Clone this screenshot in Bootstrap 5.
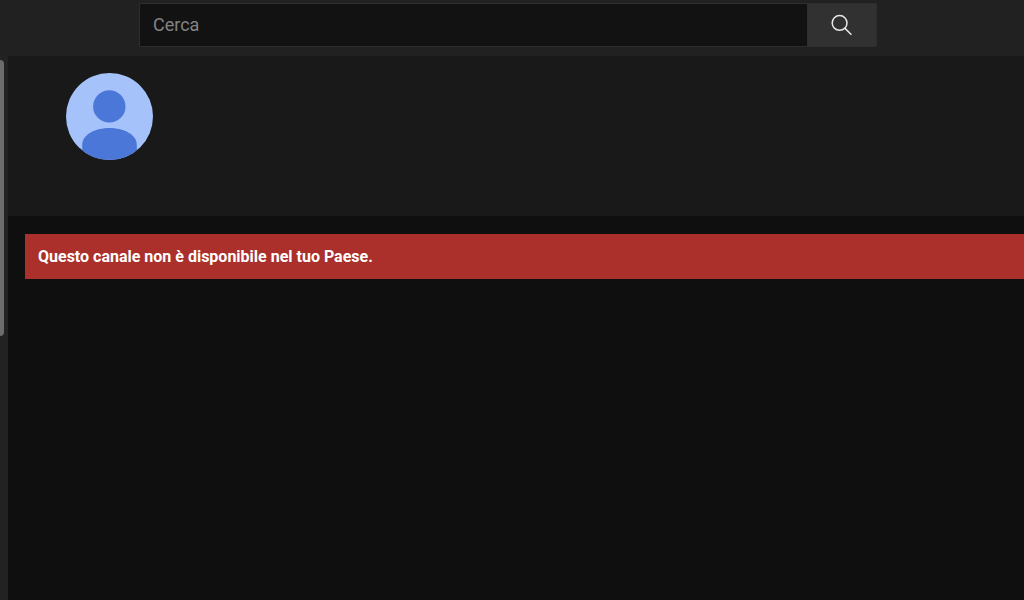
<!DOCTYPE html>
<html lang="it" data-bs-theme="dark">
<head>
<meta charset="utf-8">
<meta name="viewport" content="width=device-width, initial-scale=1">
<title>Canale non disponibile</title>
<link href="https://cdn.jsdelivr.net/npm/bootstrap@5.3.0/dist/css/bootstrap.min.css" rel="stylesheet">
<style>
  body { font-family: Roboto, "Liberation Sans", sans-serif; background: #0f0f0f; color: #fff; }
  .topbar { height: 56px; background: #212121; padding: 3px 147px 0 139px; }
  .search-group { height: 44px; }
  .search-group .form-control { background: #121212; border: 1px solid #2e2e2e; border-right: 0; border-radius: 2px 0 0 2px; padding: 0 13px 2px; font-size: 18px; color: #eee; }
  .search-group .form-control::placeholder { color: #838383; opacity: 1; }
  .search-group .btn { width: 70px; background: #313131; border: 1px solid #2e2e2e; border-radius: 0 2px 2px 0; color: #e8e8e8; }
  .guide-rail { width: 8px; background: #222; padding-top: 4px; }
  .guide-thumb { width: 4px; height: 276px; background: #6c6c6c; border-radius: 0 4px 4px 0; }
  .channel-header { height: 160px; background: #191919; padding: 17px 58px; }
  .channel-alert { margin: 18px 0 0 17px; padding: 12px 13px; background: #ab2f2a; color: #fff; font-size: 16px; line-height: 21px; }
</style>
</head>
<body class="d-flex flex-column min-vh-100">
<header class="topbar">
  <form class="input-group search-group flex-nowrap" role="search">
    <input type="search" class="form-control" placeholder="Cerca" aria-label="Cerca">
    <button type="button" class="btn d-flex align-items-center justify-content-center p-0" aria-label="Avvia ricerca">
      <svg width="22" height="22" viewBox="0 0 22 22" fill="none" stroke="currentColor" stroke-width="1.5" aria-hidden="true"><circle cx="8.6" cy="8.9" r="7.4"/><path d="M13.8 14.1 20.4 20.7"/></svg>
    </button>
  </form>
</header>
<div class="d-flex flex-grow-1">
  <aside class="guide-rail flex-shrink-0"><div class="guide-thumb"></div></aside>
  <main class="flex-grow-1">
    <section class="channel-header">
      <svg class="d-block" width="87" height="87" viewBox="0 0 87 87" role="img" aria-label="Immagine del profilo">
        <defs><clipPath id="avatar-clip"><circle cx="43.5" cy="43.5" r="43.5"/></clipPath></defs>
        <g clip-path="url(#avatar-clip)">
          <rect width="87" height="87" fill="#a5c2fa"/>
          <circle cx="43.3" cy="33.4" r="16.2" fill="#4b77d8"/>
          <path d="M16.2 87V72C16.2 61 30 55 43.5 55S70.8 61 70.8 72V87Z" fill="#4b77d8"/>
        </g>
      </svg>
    </section>
    <div class="channel-alert fw-bold" role="alert">Questo canale non è disponibile nel tuo Paese.</div>
  </main>
</div>
<script src="https://cdn.jsdelivr.net/npm/bootstrap@5.3.0/dist/js/bootstrap.bundle.min.js"></script>
</body>
</html>
